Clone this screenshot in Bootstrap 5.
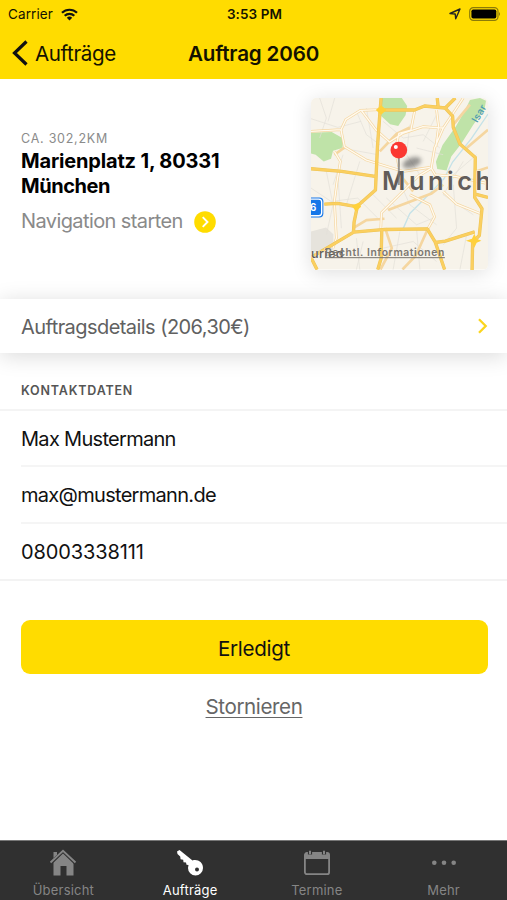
<!DOCTYPE html>
<html lang="de">
<head>
<meta charset="utf-8">
<meta name="viewport" content="width=device-width, initial-scale=1">
<title>Auftrag 2060</title>
<link href="https://cdn.jsdelivr.net/npm/bootstrap@5.3.0/dist/css/bootstrap.min.css" rel="stylesheet">
<style>
:root{--sun:#ffdc00}
body{font-family:Inter,"Liberation Sans",sans-serif;font-size:20px;line-height:25px;letter-spacing:-.4px;color:#111;background:#fff;height:900px;overflow:hidden}
svg{display:block;flex:none}
.top-bar{background:var(--sun);height:79px;color:#141200}
.status{height:27px;padding:1px 6px 0 8px;font-size:13.5px;letter-spacing:.1px}
.status>div,.title-row>div{flex:1 1 0}
.title-row{height:52px;padding:0 12px;font-size:20.6px}
.title-row h1{font-size:20.6px;line-height:25px;letter-spacing:-.17px}
.back{gap:7px}
.hero{height:220px;padding:19px 19px 0 21px}
.address{padding-top:31px}
.distance{font-size:12.5px;line-height:20px;letter-spacing:.75px;color:#8b8b8b}
.street{letter-spacing:-.17px;color:#000}
.town{letter-spacing:-.45px;color:#000}
.route{color:#8a8a8a;margin-top:10px;gap:11px;letter-spacing:-.6px}
.map-tile{width:177px;height:171.5px;border-radius:5px;box-shadow:0 3px 20px rgba(0,0,0,.13);overflow:hidden}
.details{height:54px;padding:2px 19px 0 21px;color:#616161;letter-spacing:-.56px;box-shadow:0 3px 22px rgba(0,0,0,.15);background:#fff}
.details svg{margin-top:-3px}
.section-title{height:58px;padding:25px 21px 0;font-size:12.5px;line-height:25px;letter-spacing:.8px;color:#555;border-bottom:2px solid #f4f4f4}
.contacts{border-bottom:2px solid #f3f3f3;padding-left:21px;height:169.5px;letter-spacing:-.7px}
.contacts li{height:56.5px}
.contacts li:first-child{height:54px;padding-top:3px}
.contacts li+li{border-top:2px solid #f5f5f5;padding-top:2px}
.contacts .phone{letter-spacing:-.12px;padding-top:3px!important}
.actions{padding:39.5px 19.5px 0 20.5px}
.done{background:var(--sun);height:54px;border-radius:9px;font-size:20.6px;line-height:25px;padding-top:8px;letter-spacing:-.3px;color:#111}
.done:hover{background:#f3d200}
.cancel{color:#666;font-size:20.6px;margin-top:20px;text-underline-offset:3px;text-decoration-thickness:1px}
.tabs{height:60px;background:#303030;border-top:1px solid #777;color:#858585;font-size:13px;line-height:16px;letter-spacing:.2px}
.tabs a{flex:1 1 0;color:inherit;padding-top:5.5px}
.tabs a.active{color:#fff}
.tabs svg{margin-bottom:3.5px}
</style>
</head>
<body class="d-flex flex-column">
<header class="top-bar flex-shrink-0">
  <div class="status d-flex align-items-center">
    <div class="d-flex align-items-center gap-2">Carrier
      <svg width="17" height="13" viewBox="0 0 17 13" fill="none" stroke="#111" stroke-width="2.2"><path d="M1 4.8a10.7 10.7 0 0 1 15 0M3.7 7.8a6.8 6.8 0 0 1 9.6 0"/><path d="M8.5 12.5 5.8 9.8a3.9 3.9 0 0 1 5.4 0z" fill="#111" stroke="none"/></svg>
    </div>
    <strong class="fw-semibold">3:53 PM</strong>
    <div class="d-flex align-items-center justify-content-end gap-2">
      <svg width="12" height="12" viewBox="0 0 12 12" fill="none" stroke="#222" stroke-width="1.4" stroke-linejoin="round"><path d="M1 5.5 11 1 6.7 10.8 6.2 6z"/></svg>
      <svg width="32" height="14" viewBox="0 0 32 14"><rect x=".7" y=".7" width="28.3" height="12.6" rx="3.6" fill="none" stroke="#8c7b08" stroke-width="1.2"/><rect x="2.4" y="2.5" width="24.9" height="9" rx="1.8" fill="#000"/><path d="M30 5q2 2 0 4z" fill="#8c7b08"/></svg>
    </div>
  </div>
  <div class="title-row d-flex align-items-center">
    <div class="back d-flex align-items-center">
      <svg width="16" height="26" viewBox="0 0 16 26" fill="none" stroke="#111" stroke-width="3.2"><path d="M14.5 1.5 2.5 13l12 11.5"/></svg>
      <span>Aufträge</span>
    </div>
    <h1 class="m-0 fw-semibold">Auftrag 2060</h1>
    <div></div>
  </div>
</header>

<main class="flex-grow-1">
  <section class="hero d-flex justify-content-between">
    <div class="address">
      <div class="distance">CA. 302,2KM</div>
      <div class="street fw-bold">Marienplatz 1, 80331</div>
      <div class="town fw-bold">München</div>
      <div class="route d-flex align-items-center">
        <span>Navigation starten</span>
        <svg width="22" height="22" viewBox="0 0 22 22"><circle cx="11" cy="11" r="10.8" fill="#ffdc00"/><path d="m8.7 6.2 4.8 4.8-4.8 4.8" fill="none" stroke="#fff" stroke-width="1.9"/></svg>
      </div>
    </div>
    <div class="map-tile">
      <svg width="177" height="171.5" viewBox="34 30 530 514" preserveAspectRatio="none" font-family="Inter, sans-serif">
        <defs><filter id="soft" x="-50%" y="-50%" width="200%" height="200%"><feGaussianBlur stdDeviation="7"/></filter></defs>
        <path d="M34 30h530v514H34z" fill="#f7f3ea"/>
        <path d="M34 430l45-12 22 20v48l-67 8z" fill="#e6e3dc"/>
        <g fill="#bfe3a8">
          <path d="M244 30h62l16 24-5 28-22 32-24-5-27-25z"/>
          <path d="M34 134l62-2 36 20-4 28-28 8-6 24-22 8-24-20-14-4z"/>
          <path d="M510 36l30-6 18 8-4 24-35 50-35 55-30 38-14 42-28-4-4-22 20-50 40-56 24-42z"/>
        </g>
        <path d="M564 78l-50 74-56 70-26 50-44 46-58 58-22 50" fill="none" stroke="#c5e2e8" stroke-width="4"/>
        <path d="M34 92l80 26 70-18M60 30l20 60-20 60M105 30l-20 70M170 70l30 70 40 30M34 300l60 40 80-10 60 60M80 250l20 100-20 90M130 200l-30 90M250 100l60 50 60-10 50 40M330 110l-10 90 40 60M180 220l-40 130M260 330l90 80 50-20M290 260l40 90 80 60M350 180l80 20M410 80l-40 80M460 290l10 130-40 50M490 220l-60 100 90 60M250 480l90-20 70 60M170 450l10 94M300 430l-20 114M350 420l10 124M500 440l-20 104M200 60l20 120M125 180l110 20M115 270l10 150M190 460l-20 84M530 200l-70 60M220 320l70 70" fill="none" stroke="#e3dfd8" stroke-width="2"/>
        <g fill="none" stroke-linejoin="round">
          <path d="M34 130l90-5 14-30 44-28 60-2M124 126l10 50 66 40 110 34 80-12M104 190l18 30-10 60-8 60 6 110-10 30M104 200l34-24M184 66l45 60 40 36 40-26 60-20 60 4M345 66l-12 60-36 10-10 50 10 50M240 190l50-52 40-20M490 30l-60 90-26 60-10 60 12 20 60 5 90 20M410 66l6 50-8 60M430 310l40 38 70 28M395 240l-40 24-110 110-2 46M330 320l60 30 14 36-20 36M430 290l-35 26-130 50M160 420l40-24 54-4M300 260l40 50M460 110l50-60M500 180l64-55M528 250l36-12M256 420l20 60-34 64M384 422l-36 80-40 42" stroke="#f5d6a0" stroke-width="8"/>
          <path d="M34 130l90-5 14-30 44-28 60-2M124 126l10 50 66 40 110 34 80-12M104 190l18 30-10 60-8 60 6 110-10 30M184 66l45 60 40 36 40-26 60-20 60 4M345 66l-12 60-36 10-10 50 10 50M490 30l-60 90-26 60-10 60 12 20 60 5 90 20M410 66l6 50-8 60M430 310l40 38 70 28M395 240l-40 24-110 110-2 46M330 320l60 30 14 36-20 36" stroke="#fffaf0" stroke-width="4"/>
          <path d="M244 30l-3 36-8 110-6 130-54 48-10 48-2 32M34 242l92 8 100 15M240 66h104l30-12 62 6 22 24 2 34 20 50 46 40-2 120 22 34-8 80-20 20-2 100M436 60l30-30M412 30l3 30M74 348l40-2 60 10M34 508l128-76 94-8 126-2 24 40 28 82M406 463l30-4 88-28M246 424l-2 86-10 34M34 508l18 36M526 318l38 10" stroke="#ecc457" stroke-width="10"/>
          <path d="M244 30l-3 36-8 110-6 130-54 48-10 48-2 32M34 242l92 8 100 15M240 66h104l30-12 62 6 22 24 2 34 20 50 46 40-2 120 22 34-8 80-20 20-2 100M436 60l30-30M412 30l3 30M74 348l40-2 60 10M34 508l128-76 94-8 126-2 24 40 28 82M406 463l30-4 88-28M246 424l-2 86-10 34M34 508l18 36M526 318l38 10" stroke="#fbcf5f" stroke-width="7"/>
        </g>
        <path d="M228 66l16-14 16 14-16 14zM156 352l22-8 6 12-16 14zM498 458l18-6 7-15 7 15 14 6-14 6-7 15-7-15z" fill="#ffd13b"/>
        <text transform="translate(532 106) rotate(-60)" font-size="30" font-weight="500" fill="#4b9bb0" letter-spacing="1">Isar</text>
        <rect x="4" y="328" width="67" height="60" rx="12" fill="#1677e8"/><rect x="8" y="333" width="58" height="50" rx="9" fill="none" stroke="#fff" stroke-width="4"/>
        <text x="31" y="368" font-size="29" font-weight="700" fill="#fff">6</text>
        <ellipse cx="336" cy="224" rx="29" ry="15" transform="rotate(-20 336 224)" fill="#555" opacity=".6" filter="url(#soft)"/>
        <text x="247" y="307" font-size="76" font-weight="600" letter-spacing="10.5" fill="#625d59" stroke="#faf6ec" stroke-width="3" paint-order="stroke">Munich</text>
        <path d="M297 205v86" stroke="#777" stroke-opacity=".75" stroke-width="6"/>
        <circle cx="297" cy="186" r="25" fill="#fb3831"/><circle cx="288" cy="177" r="6" fill="#fff"/>
        <text x="34" y="511" font-size="38" font-weight="500" letter-spacing="1" fill="#5d5a56" stroke="#faf6ec" stroke-width="2" paint-order="stroke">uried</text>
        <text x="76" y="504" font-size="31" font-weight="600" letter-spacing="1.8" fill="#7b7771" text-decoration="underline">Rechtl. Informationen</text>
      </svg>
    </div>
  </section>

  <section class="details d-flex align-items-center justify-content-between">
    <span>Auftragsdetails (206,30€)</span>
    <svg width="11" height="16" viewBox="0 0 11 16" fill="none" stroke="#fbd51e" stroke-width="2.3"><path d="m2 1.3 6.7 6.7L2 14.7"/></svg>
  </section>

  <h2 class="section-title fw-semibold m-0">KONTAKTDATEN</h2>
  <ul class="contacts list-unstyled m-0">
    <li class="d-flex align-items-center">Max Mustermann</li>
    <li class="d-flex align-items-center">max@mustermann.de</li>
    <li class="phone d-flex align-items-center">08003338111</li>
  </ul>

  <section class="actions d-flex flex-column align-items-center">
    <button type="button" class="done btn border-0 w-100">Erledigt</button>
    <a href="#" class="cancel">Stornieren</a>
  </section>
</main>

<nav class="tabs d-flex flex-shrink-0">
  <a href="#" class="d-flex flex-column align-items-center text-decoration-none">
    <svg width="28" height="32" viewBox="0 0 28 32" fill="currentColor"><path d="M4.5 5H8v3l-3.500 3zM14 5.500 24.500 15v13.500h-7V19h-6v9.500h-7V15z"/><path d="M1.500 16.300 14 4.500l12.500 11.800" fill="none" stroke="#303030" stroke-width="3"/><path d="M1.500 15.500 14 3.800l12.500 11.700" fill="none" stroke="currentColor" stroke-width="1.900"/></svg>
    <span>Übersicht</span>
  </a>
  <a href="#" class="active d-flex flex-column align-items-center text-decoration-none">
    <svg width="28" height="32" viewBox="0 0 28 32"><path d="M1 4.500 3.500 3l13 10.500c5-1.500 10.500 1.500 10.500 7.500a7.500 7.500 0 0 1-15 0l.5-3-2-.3-.5-2.200-2.500-.3-.3-2.500-2.600-.4-.4-2.700L1.500 7z" fill="currentColor"/><circle cx="21" cy="22.500" r="2" fill="#303030"/></svg>
    <span>Aufträge</span>
  </a>
  <a href="#" class="d-flex flex-column align-items-center text-decoration-none">
    <svg width="28" height="32" viewBox="0 0 28 32"><rect x="1.900" y="6" width="24.200" height="21.200" rx="2" fill="none" stroke="currentColor" stroke-width="1.800"/><path d="M2 6h24v6H2z" fill="currentColor"/><path d="M7 3v4.500M21 3v4.500" stroke="#303030" stroke-width="4.200"/><path d="M7 3.800v3.500M21 3.800v3.500" stroke="currentColor" stroke-width="2"/></svg>
    <span>Termine</span>
  </a>
  <a href="#" class="d-flex flex-column align-items-center text-decoration-none">
    <svg width="28" height="32" viewBox="0 0 28 32" fill="currentColor"><circle cx="4.300" cy="15.700" r="2.300"/><circle cx="14" cy="15.700" r="2.300"/><circle cx="23.700" cy="15.700" r="2.300"/></svg>
    <span>Mehr</span>
  </a>
</nav>
<script src="https://cdn.jsdelivr.net/npm/bootstrap@5.3.0/dist/js/bootstrap.bundle.min.js"></script>
</body>
</html>
